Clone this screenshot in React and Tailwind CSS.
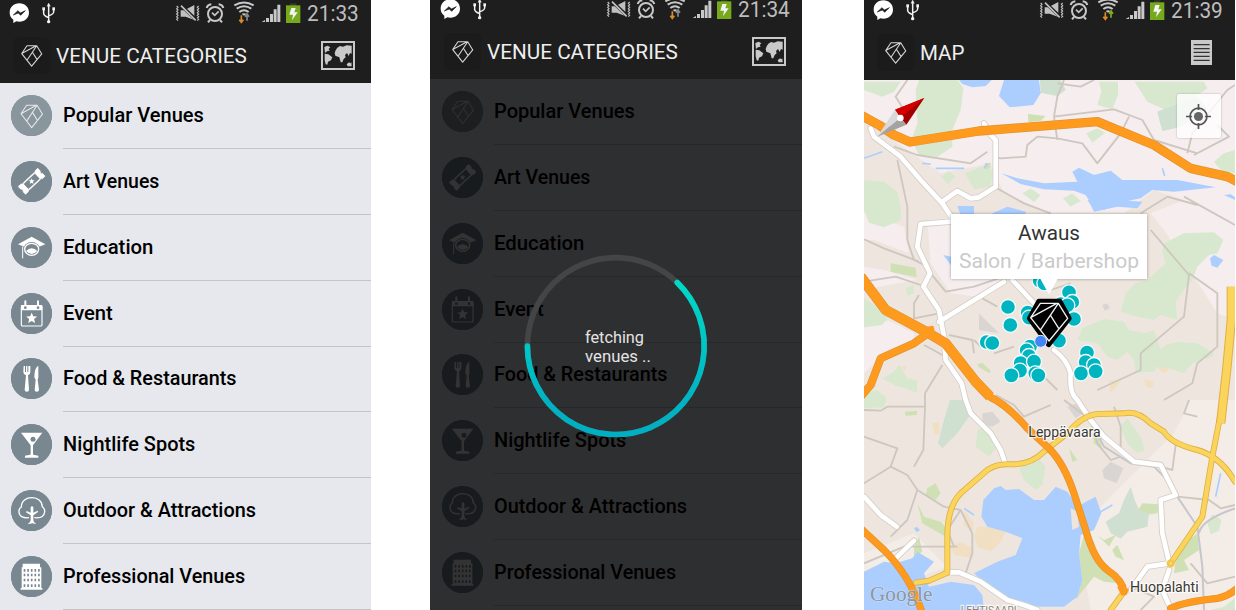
import React, { useLayoutEffect, useRef, useState } from "react";

/* Text squeezed or stretched horizontally to a given width. */
function Fit({ width, className = "", children }) {
  const ref = useRef(null);
  const [scale, setScale] = useState(1);
  useLayoutEffect(() => {
    setScale(width / ref.current.offsetWidth);
  }, [width]);
  return (
    <span
      ref={ref}
      className={"inline-block origin-left whitespace-nowrap " + className}
      style={{ transform: `scaleX(${scale})` }}
    >
      {children}
    </span>
  );
}

function GemLines(props) {
  return (
    <path
      d="M529 310H583L611 355L555 423L500 353Z M500 353L577 311 M583 310L530 389 M560 347L586 388"
      fill="none"
      strokeLinejoin="round"
      {...props}
    />
  );
}

function StatusBar({ time, className, up = "#8a8a8a" }) {
  return (
    <div className={"shrink-0 overflow-hidden " + className}>
      <div className="flex h-[26px] items-center">
        <svg viewBox="28 0 62 78" className="ml-[9.33px] h-[26px] w-[20.67px]">
          <path d="M59 10C42 10 30 22 30 38C30 47 34 54 41 59V69L50 64C53 65 56 65 59 65C76 65 88 53 88 38C88 22 76 10 59 10Z" fill="#fff" />
          <path d="M41 45L55 32L62 39L77 32L63 46L56 39Z" fill="#1e1e1e" stroke="#1e1e1e" strokeWidth="2" />
        </svg>
        <svg viewBox="122 0 46 78" className="ml-[10.67px] h-[26px] w-[15.33px]" fill="none" stroke="#f2f2f2" strokeWidth="4.5">
          <path d="M145 14V66M130 27V41Q131 48 145 53M160 27V36Q159 43 145 47" />
          <path d="M145 9L150 19H140Z" fill="#f2f2f2" strokeWidth="1" />
          <circle cx="145" cy="65" r="5" fill="#f2f2f2" stroke="none" />
          <rect x="126" y="22" width="8" height="9" fill="#f2f2f2" stroke="none" />
          <rect x="156" y="22" width="8" height="9" fill="#f2f2f2" stroke="none" />
        </svg>
        <svg viewBox="526 0 76 78" className="ml-[119.33px] h-[26px] w-[25.33px]" fill="none" stroke="#c0c0c0" strokeWidth="3.5">
          <path d="M531 18l4 4-4 4 4 4-4 4 4 4-4 4 4 4-4 4 4 4-4 4 4 4M597 18l-4 4 4 4-4 4 4 4-4 4 4 4-4 4 4 4-4 4 4 4-4 4" />
          <path d="M543 31H554L584 15V60L558 50H543Z" fill="#c0c0c0" stroke="none" />
          <path d="M544 16L590 60" stroke="#1e1e1e" strokeWidth="10" />
          <path d="M544 17L588 61" strokeWidth="5" />
        </svg>
        <svg viewBox="616 0 60 78" className="ml-[4.67px] h-[26px] w-[20px]" fill="none" stroke="#c8c8c8" strokeWidth="6">
          <circle cx="646" cy="42" r="21" />
          <path d="M621 24Q624 14 635 13M671 24Q668 14 657 13M631 60L625 67M661 60L667 67" />
          <path d="M637 38L645 46L657 34" strokeWidth="5" />
        </svg>
        <svg viewBox="698 0 66 78" className="ml-[7.33px] h-[26px] w-[22px]" fill="none" stroke="#c8c8c8" strokeWidth="6">
          <path d="M702 16Q731 -1 760 16M709 26Q731 12 753 26M717 36Q731 25 745 36" />
          <path d="M724 42Q731 37 738 42L731 47Z" fill="#c8c8c8" stroke="none" />
          <path d="M723 46V66M717 59L723 67L729 59" stroke="#d98a2b" strokeWidth="5" />
          <path d="M740 62V43M734 50L740 42L746 50" stroke={up} strokeWidth="5" />
        </svg>
        <svg viewBox="784 0 62 78" className="ml-[6.67px] h-[26px] w-[20.67px]" fill="#c9c9c9">
          <path d="M786 66L796 60V66ZM799 54H808V66H799ZM811 42H820V66H811ZM822 28H831V66H822ZM833 14H842V66H833Z" />
        </svg>
        <svg viewBox="856 0 48 78" className="ml-[3.33px] h-[26px] w-[16px]">
          <rect x="871" y="10" width="19" height="8" fill="#343a2a" />
          <rect x="859" y="16" width="43" height="53" fill="#76a91c" />
          <path d="M875 24H888L884 37H894L877 61L880 44H869Z" fill="#f4f4f4" />
        </svg>
        <div className="ml-[6px] pt-px text-[22px] leading-[18px] text-[#bdbdbd]">
          <Fit width={52}>{time}</Fit>
        </div>
      </div>
    </div>
  );
}

function MapIcon() {
  return (
    <svg viewBox="964 122 102 87" className="h-[29px] w-[34px]">
      <rect x="967" y="125" width="96" height="81" fill="none" stroke="#c9c9c9" strokeWidth="6" />
      <g fill="#c9c9c9">
        <path d="M974 140L984 136L992 141L987 146L990 151L982 153L976 158L975 150Z" />
        <path d="M975 160L986 162L998 171L994 180L985 184L983 193L978 192L975 180Z" />
        <path d="M1008 150L1013 142L1021 137L1030 139L1041 135L1056 136V160L1051 158L1047 167L1042 158L1036 164L1038 171L1032 176L1028 186H1023L1019 171L1007 166L1005 158Z" />
        <path d="M1041 192L1048 186L1052 189L1055 186L1056 198H1044Z" />
      </g>
    </svg>
  );
}

function ListIcon() {
  return (
    <svg viewBox="983 119 64 76" className="mr-[7px] h-[25.33px] w-[21.33px]">
      <rect x="983" y="119" width="64" height="76" fill="#c9c9c9" />
      <path d="M991 133H1039M991 145H1039M991 156H1039M991 168H1039M991 180H1039" stroke="#333" strokeWidth="4" />
    </svg>
  );
}

function TitleBar({ title, width, children }) {
  return (
    <div className="flex h-[57px] shrink-0 items-center pt-[2px] pr-[16px] pl-[13px]">
      <div className="flex h-[37px] w-[37px] items-center justify-center rounded-md bg-[#1b1b1b] pt-px pl-px">
        <svg viewBox="496 306 119 121" className="h-[22px] w-[21.5px]">
          <GemLines stroke="#d5d5d5" strokeWidth="6" />
        </svg>
      </div>
      <div className="ml-[5.5px] grow pt-[2px] text-[21px] leading-[25px] text-[#efefef]">
        <Fit width={width}>{title}</Fit>
      </div>
      {children}
    </div>
  );
}

const STAR = "M0 -10L2.6 -3.4L9.5 -3.1L4.2 1.3L6 8.1L0 4.4L-6 8.1L-4.2 1.3L-9.5 -3.1L-2.6 -3.4Z";

const CATEGORIES = [
  {
    label: "Popular Venues", width: 141, box: "32 285 123 123", fill: "#8a969e",
    icon: (
      <g transform="translate(-229 132) scale(0.582 0.593)">
        <GemLines stroke="#e3e7ea" strokeWidth="5.5" />
      </g>
    ),
  },
  {
    label: "Art Venues", width: 96.5, box: "32 483 123 123", fill: "#798791",
    icon: (
      <g transform="translate(94 544) rotate(-43)">
        <path d="M-40 -16H-29Q-25 -10 -20 -14H20Q25 -10 29 -16H40V-6Q33 0 40 6V16H29Q25 10 20 14H-20Q-25 10 -29 16H-40V6Q-33 0 -40 -6Z" fill="#fff" stroke="#fff" strokeWidth="2" />
        <rect x="-23" y="-10.5" width="46" height="21" fill="#798791" />
        <path d={STAR} transform="rotate(43) scale(0.95)" fill="#fff" />
      </g>
    ),
  },
  {
    label: "Education", width: 90, box: "32 49 123 123", fill: "#798791",
    icon: (
      <g>
        <path d="M53 101L94 78L135 101L94 117Z" fill="#fff" />
        <ellipse cx="94" cy="116" rx="25" ry="22" fill="#798791" />
        <ellipse cx="94" cy="116" rx="21" ry="18" fill="none" stroke="#fff" strokeWidth="4" />
        <path d="M77 121Q94 105 111 121Q94 139 77 121Z" fill="#fff" />
        <path d="M67 108V143" stroke="#fff" strokeWidth="3" />
      </g>
    ),
  },
  {
    label: "Event", width: 50, box: "32 247 123 123", fill: "#798791",
    icon: (
      <g>
        <rect x="63" y="285" width="62" height="61" rx="4" fill="none" stroke="#fff" strokeWidth="3.5" />
        <path d="M62 285Q62 283 65 283H123Q126 283 126 285V299H62Z" fill="#fff" />
        <path d="M75 272V290M113 272V290" stroke="#fff" strokeWidth="6" strokeLinecap="round" />
        <circle cx="75" cy="291" r="4" fill="#798791" />
        <circle cx="113" cy="291" r="4" fill="#798791" />
        <path d={STAR} transform="translate(94 323) scale(1.75)" fill="#fff" />
      </g>
    ),
  },
  {
    label: "Food & Restaurants", width: 173.5, box: "32 445 123 123", fill: "#798791",
    icon: (
      <g fill="#fff">
        <path d="M70 469H74V487H77V469H81V487H84V469H90V487Q90 495 83 497L86 540Q86 546 80 546Q73 546 73 540L77 497Q69 495 69 487Z" />
        <path d="M114 468Q102 474 102 503L106 510L103 540Q103 546 109 546Q116 546 116 540L112 510L114 504Z" />
      </g>
    ),
  },
  {
    label: "Nightlife Spots", width: 132, box: "32 42 123 123", fill: "#798791",
    icon: (
      <g>
        <path d="M62 68H126L98 106V133Q98 136 114 137V143H74V137Q90 136 91 133V106Z" fill="#fff" />
        <circle cx="98" cy="88" r="7.5" fill="#798791" />
      </g>
    ),
  },
  {
    label: "Outdoor & Attractions", width: 193, box: "32 240 123 123", fill: "#798791",
    icon: (
      <g>
        <path d="M86 323C70 325 57 321 56 306C55 298 58 294 63 291C63 272 78 263 95 263C112 263 125 273 126 290C131 294 134 298 133 306C131 321 119 325 102 323" fill="none" stroke="#fff" strokeWidth="4" />
        <path d="M91 292L95 288L99 292V308L112 302L113 306L99 316V330Q99 337 108 342L96 340L82 343Q91 337 91 330V316L77 307L79 303L91 308Z" fill="#fff" />
      </g>
    ),
  },
  {
    label: "Professional Venues", width: 182, box: "32 438 123 123", fill: "#798791",
    icon: (
      <g>
        <path d="M67 461H119V472H123V534H126V539H61V534H64V472H67Z" fill="#fff" />
        <path d="M70 481H119M70 495H119M70 510H119M70 527H119" stroke="#798791" strokeWidth="8" strokeDasharray="5 5.8" />
      </g>
    ),
  },
];

function CategoryList() {
  return (
    <div className="flex flex-col">
      {CATEGORIES.map((c) => (
        <div key={c.label} className="flex h-[65.9px] shrink-0 items-stretch pl-[10.5px]">
          <div className="flex w-[41px] items-center pb-[1.2px]">
            <svg viewBox={c.box} className="h-[41px] w-[41px] overflow-hidden rounded-full bg-[#798791]">
              <rect x="0" y="0" width="200" height="700" fill={c.fill} />
              {c.icon}
            </svg>
          </div>
          <div className="ml-[11px] flex grow items-center border-b border-[#c3c4c6] pb-[1.2px] text-[21px] leading-[26px] font-medium text-black">
            <Fit width={c.width}>{c.label}</Fit>
          </div>
        </div>
      ))}
    </div>
  );
}

const PINS = [
  [527, 842], [541, 850], [615, 877], [625, 906], [590, 912], [610, 916], [432, 921], [491, 938], [495, 953], [630, 957],
  [439, 975], [368, 1026], [385, 1029], [585, 1022], [498, 1040], [488, 1051], [495, 1068], [470, 1089], [510, 1085],
  [468, 1112], [442, 1126], [514, 1120], [523, 1126], [669, 1058], [665, 1086], [690, 1095], [651, 1120], [695, 1114],
];

const GREENS = [
  "M0 245H110L90 275L55 290L0 270Z",
  "M165 240H280L298 265L290 330L265 390V440L220 470L165 465L143 420L160 370L155 270Z",
  "M0 540L60 545L100 575L110 620V660L60 682L15 668L0 630Z",
  "M705 245H762V285L745 328L700 315L712 275Z",
  "M812 245H1020L1030 265L980 300L905 330L850 305Z",
  "M880 335L1000 290L1030 325L950 380L895 393Z",
  "M667 400L700 385L724 398L685 428Z",
  "M303 520L350 500L387 510L380 560L330 568Z",
  "M232 530L255 513L275 530L252 553Z",
  "M475 580L500 566L530 585L510 606Z",
  "M597 595L625 580L650 603L620 620Z",
  "M1050 485L1080 460L1113 450V520L1075 515Z",
  "M0 895L40 920L72 950L55 975L0 982Z",
  "M55 1135L90 1115L105 1092L130 1135L158 1140L160 1180L125 1165L95 1158Z",
  "M0 1180L40 1170L68 1195L60 1222L0 1225Z",
  "M125 865L148 855L150 880L130 888Z",
  "M900 730L960 700L1050 697L1078 720L1060 760L1035 765L1000 800L985 840L960 870L935 905L940 960L890 945L870 960L820 950L770 935L785 880L815 850L850 840L905 790L895 755Z",
  "M655 985L720 957L780 965L795 990L845 1000L870 990L890 1050L905 1035L940 1025L1000 1030L1050 1060L1045 1070L985 1090L960 1120L915 1105L880 1100L870 1115L815 1120L810 1080L790 1055L760 1080L730 1070L700 1030L640 1020Z",
  "M340 1290L375 1275L380 1310L400 1340L375 1370L335 1340Z",
  "M465 1405L520 1372L545 1400L535 1455L515 1470L480 1440Z",
  "M1080 1820L1113 1795V1830H1040Z",
  "M1030 1568L1045 1543L1072 1560L1065 1592L1040 1603Z",
  "M768 1280L790 1255L830 1310L842 1350L820 1360L790 1330Z",
];
const LIMES = [
  "M492 342L545 348L530 362L493 367Z",
  "M80 790L155 803L158 832L125 825L80 815Z",
  "M810 1550L835 1510L885 1513L880 1540Z",
  "M660 1605L690 1625L700 1680L740 1720L765 1750L720 1745L690 1730L650 1780L635 1800L655 1740L645 1660Z",
  "M975 1620L1000 1600L1005 1650L960 1680L975 1710L930 1720L935 1680Z",
  "M160 1510L180 1550L230 1565L260 1600L245 1610L175 1570Z",
  "M190 1465L215 1450L230 1480L215 1500L185 1485Z",
  "M700 1605L720 1620L755 1605L735 1640Z",
  "M745 1650L760 1635L780 1680L755 1670Z",
  "M685 1300L710 1320L715 1350L690 1330Z",
  "M340 1093L355 1088L380 1112L376 1120L345 1102Z",
  "M122 1235L160 1232L158 1245L125 1247Z",
  "M615 1345L640 1380L625 1385Z",
  "M150 1640L165 1610L175 1655L150 1670Z",
  "M362 490L380 488L378 505L364 508Z",
];
const WATER = [
  "M285 240H383L365 258L325 262L295 252Z",
  "M420 240H525L530 280L508 315L437 322L405 288Z",
  "M412 520L460 535L540 550L640 545L625 515L645 503L690 525L740 512L775 540L940 540L1055 562L930 575L865 570L830 595L760 610L720 630L690 625L665 585L630 572L540 568L470 552Z",
  "M670 600H760L835 605L820 625L760 620L690 635L680 615Z",
  "M280 618H330V645H290Z",
  "M385 640L430 620L485 635V645H385Z",
  "M238 765L262 770V797Z",
  "M1038 775L1050 765L1078 780L1060 803L1043 797Z",
  "M1080 585L1100 583L1113 592V600Z",
  "M352 1550L358 1500L390 1465L410 1458L425 1470L465 1467L510 1500L540 1500L575 1460L610 1475L640 1520L670 1503L695 1490L712 1540L690 1590L650 1605L645 1660L655 1740L640 1790L600 1820H520L470 1808L420 1805L330 1720L400 1685L455 1665L475 1615L425 1595L370 1580Z",
  "M0 1715L60 1685L95 1690L145 1675L160 1655L210 1685L180 1720L195 1760L260 1745L330 1755L355 1785L360 1830H0Z",
  "M150 1585L158 1580L168 1590L158 1597Z",
];
const MINOR = [
  "M130 240L95 290L120 330M600 240L580 290L570 350L580 420M570 350L750 328L835 360L870 420L1000 460M580 250L650 260L690 240",
  "M795 350L770 400L700 490L655 430L580 415L520 410L490 435L485 470L410 475L390 470",
  "M370 455L320 490L160 465L90 440M970 460L985 400L1090 270L1113 255M990 465L1095 410L1060 375",
  "M390 560L480 610L560 640M100 480L130 620V720L150 780L190 800M0 718L60 745L165 785",
  "M860 690L975 825L960 950L830 1060V1110L700 1170",
  "M975 820L1060 880V1040L1000 1090L985 1150L900 1200M960 590L1113 675M830 640L910 590L1000 615M200 820L245 875L330 860L420 830",
  "M620 850L560 870M0 845L95 830L170 855M165 885L150 910V955L225 940",
  "M255 1005L325 1020L330 1060M330 1020L350 1040M390 1060L450 1040M355 895L400 920M180 1035L235 1065",
  "M235 1095L183 1180V1220L178 1350L150 1400M0 1230L50 1232L70 1220H180M0 1310L100 1345L80 1400L0 1450",
  "M80 1400L130 1425L160 1470L240 1520L290 1530L325 1600V1660L305 1720M160 1470L130 1560L80 1610M0 1690L120 1640L280 1640",
  "M290 1530L250 1590L270 1640M600 1200L680 1260L700 1330L740 1380L770 1370M750 1220L770 1280V1340M975 1200L960 1240L1000 1250M935 1335L925 1410L890 1400",
  "M1113 1515L1070 1525L1035 1500L940 1490M1113 1730L1030 1750L980 1690M830 1830L870 1790L800 1760M395 1185L450 1215L480 1250L560 1215M520 1110L580 1170",
];

function CityMap() {
  return (
    <svg viewBox="0 240 1113 1590" preserveAspectRatio="none" className="h-[530px] w-[371px]">
      <rect x="0" y="240" width="1113" height="1590" fill="#eee6de" />
      <g fill="#f5edee">
        <path d="M100 240H1113V660L1010 690L960 600L870 570L780 640L560 640L420 580L380 490L230 520L100 430L0 350V240Z" />
        <path d="M860 640L960 600L1113 640V960L1060 940L900 690Z" />
        <path d="M0 640L120 680L135 760L30 720L0 720ZM190 660L262 655V830L420 840L340 890L260 880L200 790Z" />
        <path d="M0 800L60 810L160 840L100 850L0 870ZM0 982L75 962L150 1000L150 1020L55 1070L0 1120Z" />
        <path d="M980 1200H1113V1830H680L640 1600L730 1500L930 1300Z" fill="#f4ece7" />
        <path d="M0 1660L150 1600L250 1700L0 1790Z" fill="#f4ece7" />
      </g>
      <g fill="#d9d5d3">
        <path d="M345 940L405 1000L345 990ZM715 1410L740 1385L778 1405L758 1450L720 1435Z" />
        <path d="M355 1240L385 1235L410 1265L385 1280L355 1275ZM610 1220L650 1205L665 1235L635 1255ZM715 915L730 910L738 925L722 932Z" />
      </g>
      <g fill="#f1dfc4">
        <path d="M300 1530L330 1570L325 1590L300 1580ZM340 1580L370 1580L425 1595L410 1625L380 1655L340 1640L330 1610ZM260 1640L290 1625L325 1645L325 1675L270 1665Z" />
        <path d="M880 1100L905 1085L915 1110L895 1120ZM735 1140L770 1145L740 1180ZM840 1135L870 1145L865 1165L845 1160ZM205 1270L225 1265L228 1300L212 1305ZM110 1100L128 1098L122 1112Z" />
      </g>
      <g fill="#d8e8cf">{GREENS.map((d) => <path key={d} d={d} />)}</g>
      <g fill="#cfe0b4">{LIMES.map((d) => <path key={d} d={d} />)}</g>
      <path d="M528 240H590L605 270L580 288L530 278ZM880 335L1000 290L1030 325L950 380L895 393ZM258 1200H300L325 1235L280 1300L235 1345L222 1330L240 1260ZM800 1460L812 1500L825 1530L855 1540L850 1580L790 1595L770 1616L740 1600L725 1565L765 1540L780 1500Z" fill="#cfdfd0" />
      <g fill="#abceff">{WATER.map((d) => <path key={d} d={d} />)}</g>
      <path d="M0 475L55 455M175 490L200 492M215 505L300 505M370 490L360 505M895 505L902 528M300 1525L330 1545M710 1535L745 1515M1070 1420L1055 1490" fill="none" stroke="#abceff" strokeWidth="5" />
      <path d="M620 1525L640 1535L645 1580L625 1590M505 1485L530 1475L540 1495Z" fill="#eee6de" />
      <g fill="none" stroke="#cdc7bf" strokeWidth="5.5" strokeLinejoin="round">
        {MINOR.map((d) => <path key={d} d={d} />)}
      </g>
      <path d="M680 1260L720 1340L800 1390L870 1400L910 1440L940 1490L1000 1580L1015 1700L1020 1830M1113 1525Q1010 1560 1005 1600" fill="none" stroke="#c6c7cc" strokeWidth="6" />
      <g fill="none" strokeLinejoin="round" strokeLinecap="round">
        {[["#d3cdc6", 19], ["#ffffff", 14]].map(([color, w]) => (
          <g key={color} stroke={color} strokeWidth={w}>
            <path d="M20 385L30 410L110 470L170 540L235 610L275 670M235 605L280 573L320 595L345 592L395 560V420L380 405L360 370" />
            <path d="M262 665L170 672L160 740L198 820L178 860L225 930L240 1010L245 1080L293 1150L305 1200L320 1240L380 1300L410 1350L422 1385" />
            <path d="M225 965L420 845M445 840L515 915M570 1050Q610 1080 620 1120Q615 1180 640 1200L680 1260L720 1310L810 1385L890 1395L935 1485L890 1500L895 1600L915 1685" />
            <path d="M0 1490L50 1545L98 1580M95 1675L150 1622M245 1717H285L350 1745L430 1800L480 1815L520 1830M915 1690L850 1700L800 1770M915 1710L895 1770L915 1815" />
          </g>
        ))}
        {[["#dfb046", 18], ["#fbd45c", 13]].map(([color, w]) => (
          <g key={color} stroke={color} strokeWidth={w}>
            <path d="M155 1748L195 1742L250 1718V1610Q250 1520 290 1480L370 1410Q400 1390 440 1393Q500 1395 540 1355L610 1300Q660 1240 710 1242L780 1240Q820 1230 860 1270L900 1295Q920 1330 1000 1350Q1070 1370 1113 1445" />
            <path d="M1078 1200L1045 1370L1015 1550L920 1690M780 1775L740 1830" />
          </g>
        ))}
        <path d="M1102 860V960L1088 1110L1070 1270" stroke="#dfb046" strokeWidth="28" strokeLinecap="butt" />
        <path d="M1102 860V960L1088 1110L1070 1270" stroke="#fbd45c" strokeWidth="22" strokeLinecap="butt" />
        {[["#e0922f", 0], ["#fe9a1e", 4]].map(([color, cut]) => (
          <g key={color} stroke={color}>
            <path d="M-10 345L45 375L90 405L138 426L345 393L700 365L870 435L980 505L1090 530L1130 550" strokeWidth={28 - cut} />
            <path d="M-10 830L65 930L195 1000L245 1030L335 1145L378 1190" strokeWidth={31 - cut} strokeLinecap="butt" />
            <path d="M185 1005L150 1030L50 1075L20 1155L-10 1190" strokeWidth={24 - cut} />
            <path d="M380 1192Q430 1215 490 1285L555 1345Q600 1390 630 1480L665 1590Q690 1680 730 1710Q775 1740 780 1775" strokeWidth={22 - cut} />
            <path d="M-10 1585L60 1650Q140 1730 175 1840M920 1825Q960 1805 1060 1795Q1090 1790 1120 1765" strokeWidth={22 - cut} />
          </g>
        ))}
        <path d="M765 1762L790 1770L775 1782ZM190 985L205 982L208 1000Z" stroke="#fe9a1e" strokeWidth="9" fill="#fe9a1e" />
        <circle cx="920" cy="1690" r="8" fill="#fbe09a" stroke="#f5c64a" strokeWidth="9" />
      </g>

      <g fontFamily="Roboto, sans-serif" fill="#3b3833" stroke="#fff" strokeOpacity="0.75" strokeWidth="7" paintOrder="stroke">
        <text x="493" y="1312" fontSize="42" textLength="217" lengthAdjust="spacingAndGlyphs">Leppävaara</text>
        <text x="798" y="1775" fontSize="42" textLength="206" lengthAdjust="spacingAndGlyphs">Huopalahti</text>
        <text x="290" y="1843" fontSize="30" fill="#8a8378" textLength="168" lengthAdjust="spacingAndGlyphs">LEHTISAARI</text>
      </g>
      <text x="18" y="1802" fontFamily="'Liberation Serif', serif" fontSize="62" fill="#8b97a8" stroke="#e4e6ea" strokeWidth="4" strokeOpacity="0.5" paintOrder="stroke" textLength="187" lengthAdjust="spacingAndGlyphs">Google</text>

      <path d="M93 329L181 294L127 374L109 353Z" fill="#a30000" />
      <path d="M93 329L181 294L109 353Z" fill="#d40000" />
      <path d="M93 329L109 353L40 410Z" fill="#d9d9d9" />
      <path d="M127 374L109 353L40 410Z" fill="#a3a3a3" />
      <circle cx="109" cy="354" r="10" fill="#fff" />

      <g fill="#00b5c0" stroke="#f3fbfb" strokeWidth="4">
        {PINS.map(([x, y]) => <circle key={`${x}-${y}`} cx={x} cy={y} r="22.5" />)}
      </g>
      <path d="M525 904H587L615 955L554 1033L497 955Z" fill="#000" stroke="#000" strokeWidth="16" strokeLinejoin="round" />
      <g transform="translate(0 600)"><GemLines stroke="#f2f2f2" strokeWidth="4" /></g>
      <circle cx="530" cy="1024" r="18" fill="#4285f4" stroke="#dfe9fb" strokeWidth="3" />
    </svg>
  );
}

function Progress() {
  return (
    <div className="absolute top-[251px] left-[92px] flex h-[190px] w-[188px] items-center justify-center">
      <svg viewBox="0 0 188 190" className="absolute inset-0 h-[190px] w-[188px]" fill="none" strokeWidth="5.7" strokeLinecap="round">
        <defs>
          <linearGradient id="ring" x1="0" y1="0" x2="0" y2="1">
            <stop offset="0" stopColor="#00d9c6" />
            <stop offset="0.75" stopColor="#00b4c3" />
            <stop offset="1" stopColor="#00afc1" />
          </linearGradient>
        </defs>
        <circle cx="93.8" cy="95" r="88.4" stroke="#444546" />
        <path d="M155.3 31.6A88.4 88.4 0 1 1 5.4 95" stroke="url(#ring)" />
      </svg>
      <div className="relative ml-[3px] w-[66px] pt-[3px] text-[16px] leading-[18.4px] text-[#e4e4e4]">
        <div><Fit width={59}>fetching</Fit></div>
        <div><Fit width={66}>venues ..</Fit></div>
      </div>
    </div>
  );
}

export default function App() {
  return (
    <div className="flex h-[610px] w-[1236px] overflow-hidden bg-white font-['Roboto',sans-serif]">
      <section className="flex h-full w-[371px] flex-col overflow-hidden bg-[#e7e8ed]">
        <header className="shrink-0 bg-[#1e1e1e]">
          <StatusBar time="21:33" className="h-[26px]" />
          <TitleBar title="VENUE CATEGORIES" width={190.5}><MapIcon /></TitleBar>
        </header>
        <CategoryList />
      </section>

      <section className="relative ml-[59px] flex h-full w-[372px] flex-col overflow-hidden bg-[#e7e8ed]">
        <header className="shrink-0 bg-[#1e1e1e] pl-px">
          <StatusBar time="21:34" className="h-[22px] [&>div]:-mt-[4px]" />
          <TitleBar title="VENUE CATEGORIES" width={190.5}><MapIcon /></TitleBar>
        </header>
        <div className="relative grow pl-px">
          <CategoryList />
          <div className="absolute inset-0 bg-black/80" />
        </div>
        <Progress />
      </section>

      <section className="ml-[62px] flex h-full w-[371px] flex-col overflow-hidden">
        <header className="shrink-0 bg-[#1e1e1e]">
          <StatusBar time="21:39" className="h-[23px] [&>div]:-mt-[3px]" up="#7fae1e" />
          <TitleBar title="MAP" width={44}><ListIcon /></TitleBar>
        </header>
        <div className="relative h-[530px]">
          <CityMap />
          <div className="absolute top-[14px] right-[14px] flex h-[44px] w-[44px] items-center justify-center rounded-[2px] bg-white/80 shadow-[0_0_2px_rgba(0,0,0,0.3)]">
            <svg viewBox="0 0 74 74" className="mr-px h-[25px] w-[25px]" fill="none" stroke="#555" strokeWidth="5">
              <circle cx="37" cy="37" r="25" />
              <circle cx="37" cy="37" r="13.5" fill="#666" stroke="none" />
              <path d="M37 0V18M37 56V74M0 37H18M56 37H74" />
            </svg>
          </div>
          <div className="absolute top-[134px] left-[87px] h-[65px] w-[196px] bg-white pt-[5px] text-[21px] leading-[28px] shadow-[0_0_3px_rgba(0,0,0,0.35)]">
            <div className="pl-[67px] text-[#333]"><Fit width={62}>Awaus</Fit></div>
            <div className="pl-[8px] text-[#cacaca]"><Fit width={180.5}>Salon / Barbershop</Fit></div>
            <svg viewBox="0 0 54 50" className="absolute top-[64px] left-[89px] h-[17px] w-[18px]">
              <path d="M0 0H54L27 49Z" fill="#fff" />
            </svg>
          </div>
        </div>
      </section>
    </div>
  );
}
